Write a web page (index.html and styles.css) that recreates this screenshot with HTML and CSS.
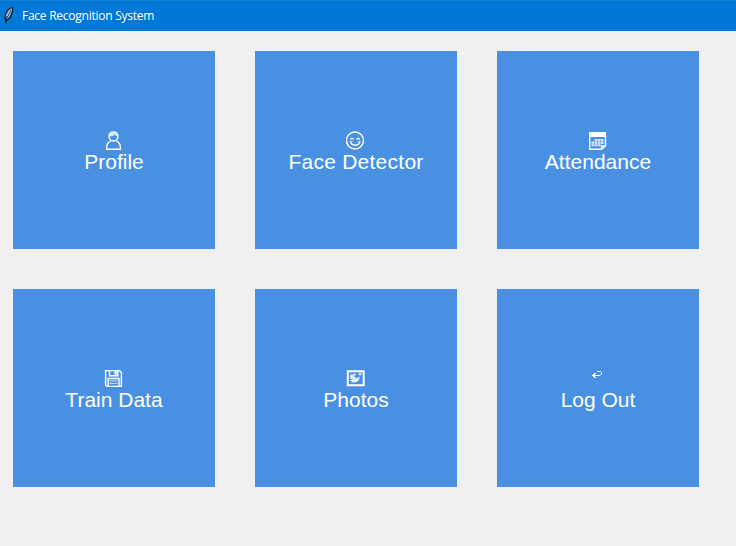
FILE: index.html
```html
<!DOCTYPE html>
<html lang="en">
<head>
<meta charset="utf-8">
<title>Face Recognition System</title>
<link rel="stylesheet" href="styles.css">
</head>
<body>
<header class="titlebar">
  <svg class="feather" width="12" height="18" viewBox="0 0 12 18">
    <path d="M3 15.5V13L2 11.5 2.5 7.5 4.5 3.5 7.5 1 9.5.8 9.7 3.5 8.5 7.5 6.5 11 4 13Z" fill="#6fb1e6" stroke="#101820" stroke-width="1.2"/>
    <path d="M3 16.5V12L7.8 3" fill="none" stroke="#06121f" stroke-width="1"/>
    <path d="M4 9 7.5 2.5" fill="none" stroke="#d5edff" stroke-width=".8"/>
  </svg>
  <span class="title">Face Recognition System</span>
</header>
<main class="grid">
  <button class="tile">
    <svg class="icon" viewBox="0 0 20 20">
      <path d="M9.5.9C6.5.9 5 2.8 5 5.3S6.8 10 9.5 10 14 7.8 14 5.3 12.5.9 9.5.9Z"/>
      <path d="M5 5.2C8 5.5 9.6 4.8 10.5 3.4c.7 1.2 2 1.8 3.6 2C14 2.5 12 .8 9.6.8S5.1 2.6 5 5.2Z" class="soft"/>
      <path d="M6.5 10.2C3.7 11.6 2.6 13 2.6 16.2V18.3H16.4V16.2C16.4 13 15.3 11.6 12.5 10.2"/>
    </svg>
    <span>Profile</span>
  </button>
  <button class="tile wide">
    <svg class="icon" viewBox="0 0 20 20">
      <circle cx="9" cy="9.5" r="8.5"/>
      <path d="M4.5 8.5Q6 6.3 7.5 8.5M10.8 8.5Q12.3 6.3 13.8 8.5M4.6 11.2C5.6 15.2 12.7 15.2 13.7 11.2"/>
      <path d="M3.5 10.5H6.5M11.8 10.5H14.8" class="faint"/>
    </svg>
    <span>Face Detector</span>
  </button>
  <button class="tile">
    <svg class="icon" viewBox="0 0 20 20">
      <path d="M1 1H18V6H1Z" class="solid"/>
      <path d="M1.7 5V18.3H13.7L17.5 14.8V5M13.7 18.3V15H17.5"/>
      <path d="M6 8H15.5V13H13V15.2H3.5V10H6Z" class="soft"/>
      <path d="M3.5 10.5H15.5M3.5 13H13M6.5 8V15M9.5 8V15M12.5 8V15" class="lines"/>
    </svg>
    <span>Attendance</span>
  </button>
  <button class="tile">
    <svg class="icon" viewBox="0 0 20 20">
      <path d="M1.6 1.6H15.5L17.4 3.5V17.4H3L1.6 16Z"/>
      <path d="M5.5 1.5V6.8H13.8V1.5M4.2 17V9.5H15V17"/>
      <path d="M10.5 2H12.7V5.7H10.5Z" class="solid"/>
      <path d="M5.5 11.8H13.5M5.5 14.4H13.5" class="faint"/>
    </svg>
    <span>Train Data</span>
  </button>
  <button class="tile">
    <svg class="icon" viewBox="0 0 20 20">
      <path d="M1.8 2.3H17.7V16.3H1.8Z" class="frame"/>
      <path d="M4 5.5H7L8.5 4.3 10 5.5 8 7.5 11 9 14 7.5 13 11 10 13.5H5L7 11 4 9.5Z" class="soft"/>
      <path d="M12.5 5H15.5M14 3.5V6.5M4.5 11.5H7M8 11.5H12" class="fine"/>
    </svg>
    <span>Photos</span>
  </button>
  <button class="tile">
    <svg class="icon" viewBox="0 0 20 20">
      <path d="M9 2.5H12.5L13.5 3.5V5L12 6.5H5" class="fine"/>
      <path d="M4 6H5V5H6V4H8V5H7V6H8V7H7V8H8V9H6V8H5V7H4Z" class="solid"/>
    </svg>
    <span>Log Out</span>
  </button>
</main>
</body>
</html>
```

FILE: styles.css
```css
* { box-sizing: border-box; }
body {
  margin: 0;
  height: 546px;
  background: #f0f0f0;
  overflow: hidden;
}
.titlebar {
  display: flex;
  align-items: center;
  height: 31px;
  padding-left: 3px;
  background: #0078d7;
  border-top: 1px solid #1883d9;
  color: #fff;
  font: 12px/16px "Open Sans", "Noto Sans", sans-serif;
}
.feather { margin-right: 7px; }
.title { letter-spacing: -0.25px; }
.grid {
  display: grid;
  grid-template-columns: repeat(3, 202px);
  grid-auto-rows: 198px;
  gap: 40px;
  padding: 20px 13px;
}
.tile {
  display: flex;
  flex-direction: column;
  align-items: center;
  padding: 80px 0 0;
  border: 0;
  background: #4a90e2;
  color: #fff;
  font: 21px/24px "Liberation Sans", Arial, sans-serif;
}
.tile.wide { letter-spacing: 0.25px; }
.tile span { margin-top: -1px; white-space: nowrap; }
.icon {
  width: 20px;
  height: 20px;
  fill: none;
  stroke: #fff;
  stroke-width: 1.4;
}
.icon .soft { fill: #d9e9fb; stroke: none; }
.icon .solid { fill: #fff; stroke: none; }
.icon .faint { stroke: #c9dff8; stroke-width: 1; }
.icon .lines { stroke: #78aeea; stroke-width: .7; }
.icon .frame { stroke-width: 2; }
.icon .fine { stroke-width: 1; }
```
